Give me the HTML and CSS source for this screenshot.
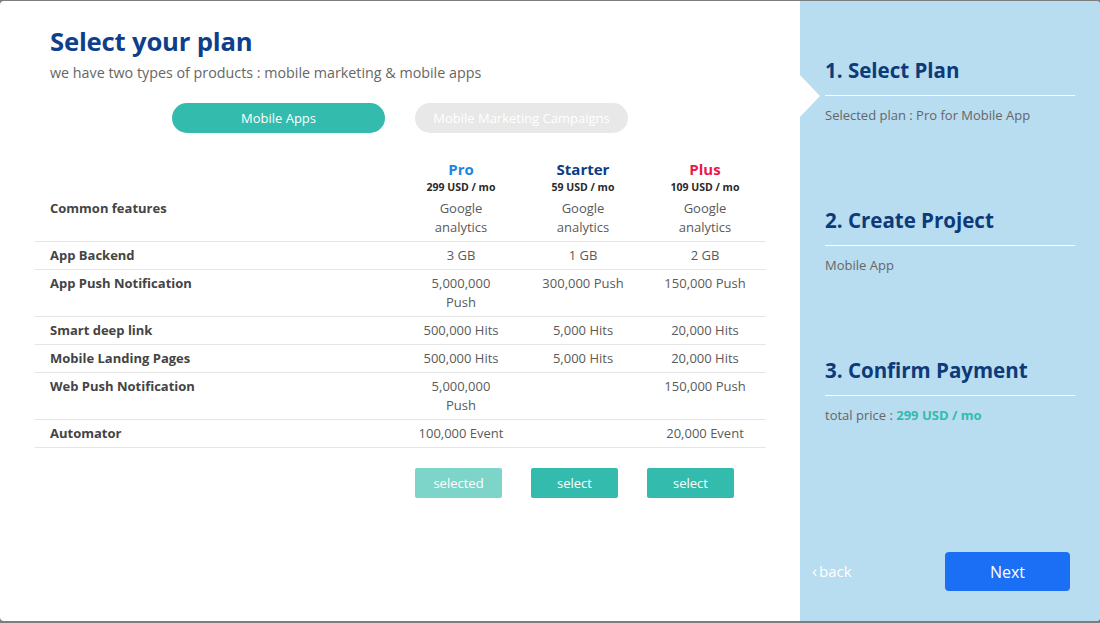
FILE: index.html
```html
<!DOCTYPE html>
<html lang="en">
<head>
<meta charset="utf-8">
<title>Select your plan</title>
<link rel="stylesheet" href="styles.css">
</head>
<body>
<div class="modal">
  <main class="main">
    <h1 class="title">Select your plan</h1>
    <p class="subtitle">we have two types of products : mobile marketing &amp; mobile apps</p>
    <div class="tabs">
      <button class="tab tab-active">Mobile Apps</button>
      <button class="tab tab-off">Mobile Marketing Campaigns</button>
    </div>
    <table class="plans">
      <colgroup><col class="c-label"><col class="c-plan"><col class="c-plan"><col class="c-plan"></colgroup>
      <thead>
        <tr class="head">
          <th></th>
          <th><span class="pname pro">Pro</span><span class="price">299 USD / mo</span></th>
          <th><span class="pname starter">Starter</span><span class="price">59 USD / mo</span></th>
          <th><span class="pname plus">Plus</span><span class="price">109 USD / mo</span></th>
        </tr>
      </thead>
      <tbody>
        <tr><td class="lbl">Common features</td><td>Google<br>analytics</td><td>Google<br>analytics</td><td>Google<br>analytics</td></tr>
        <tr><td class="lbl">App Backend</td><td>3 GB</td><td>1 GB</td><td>2 GB</td></tr>
        <tr><td class="lbl">App Push Notification</td><td>5,000,000<br>Push</td><td>300,000 Push</td><td>150,000 Push</td></tr>
        <tr><td class="lbl">Smart deep link</td><td>500,000 Hits</td><td>5,000 Hits</td><td>20,000 Hits</td></tr>
        <tr><td class="lbl">Mobile Landing Pages</td><td>500,000 Hits</td><td>5,000 Hits</td><td>20,000 Hits</td></tr>
        <tr><td class="lbl">Web Push Notification</td><td>5,000,000<br>Push</td><td></td><td>150,000 Push</td></tr>
        <tr><td class="lbl">Automator</td><td>100,000 Event</td><td></td><td>20,000 Event</td></tr>
      </tbody>
    </table>
    <div class="actions">
      <button class="pick pick-selected">selected</button>
      <button class="pick">select</button>
      <button class="pick">select</button>
    </div>
  </main>
  <aside class="side">
    <section class="step">
      <h2 class="step-title">1. Select Plan</h2>
      <p class="step-text">Selected plan : Pro for Mobile App</p>
    </section>
    <section class="step">
      <h2 class="step-title">2. Create Project</h2>
      <p class="step-text">Mobile App</p>
    </section>
    <section class="step">
      <h2 class="step-title">3. Confirm Payment</h2>
      <p class="step-text">total price : <strong class="total">299 USD / mo</strong></p>
    </section>
    <div class="footer">
      <a class="back" href="#"><span class="chev">‹</span>back</a>
      <button class="next">Next</button>
    </div>
  </aside>
</div>
</body>
</html>
```

FILE: styles.css
```css
* { box-sizing: border-box; }
html, body { margin: 0; padding: 0; }
body {
  width: 1100px;
  height: 623px;
  background: #7d7d7d;
  font-family: "Open Sans", "Noto Sans", sans-serif;
  overflow: hidden;
}
.modal {
  margin-top: 1px;
  width: 1100px;
  height: 620px;
  display: flex;
  background: #fff;
  border-radius: 4px;
  overflow: hidden;
}
.main {
  width: 800px;
  padding: 0 35px;
  display: flex;
  flex-direction: column;
}
.title {
  margin: 25px 0 0 15px;
  font-size: 25.7px;
  line-height: 32px;
  font-weight: 700;
  color: #0f3f8c;
  letter-spacing: -0.2px;
}
.subtitle {
  margin: 5px 0 0 15px;
  font-size: 14.3px;
  line-height: 20px;
  color: #666;
}
.tabs {
  margin-top: 20px;
  display: flex;
  justify-content: center;
  gap: 30px;
}
.tab {
  width: 213px;
  height: 30px;
  border: 0;
  border-radius: 15px;
  font-family: inherit;
  font-size: 13px;
  color: #fff;
  padding: 0;
}
.tab-active { background: #33bbad; }
.tab-off { background: #e8e8e8; }
.plans {
  margin-top: 27px;
  width: 731px;
  border-collapse: collapse;
  table-layout: fixed;
  font-size: 13px;
  color: #5a5a5a;
}
.c-label { width: 365px; }
.c-plan { width: 122px; }
.head th {
  padding: 0;
  text-align: center;
  vertical-align: top;
}
.pname {
  display: block;
  font-size: 15px;
  line-height: 18px;
  font-weight: 700;
}
.pro { color: #1e86e0; }
.starter { color: #0d3c82; }
.plus { color: #e8194c; }
.price {
  display: block;
  padding-top: 2px;
  font-size: 10.5px;
  line-height: 15px;
  font-weight: 700;
  color: #2a2a2a;
}
.plans td {
  padding: 4px 0;
  line-height: 19px;
  text-align: center;
  vertical-align: top;
  border-bottom: 1px solid #e6e6e6;
}
.plans td.lbl {
  text-align: left;
  padding-left: 15px;
  font-weight: 700;
  color: #444;
}
.actions {
  margin: 20px 0 0 380px;
  display: flex;
  gap: 29px;
}
.pick {
  width: 87px;
  height: 30px;
  border: 0;
  border-radius: 2px;
  background: #33bbad;
  color: #fff;
  font-family: inherit;
  font-size: 13px;
  padding: 0;
}
.pick-selected { background: #7dd5ca; }
.side {
  position: relative;
  width: 300px;
  background: #b8dcf0;
  padding: 55px 25px 0 25px;
  display: flex;
  flex-direction: column;
}
.side::before {
  content: "";
  position: absolute;
  left: 0;
  top: 74px;
  border-top: 21px solid transparent;
  border-bottom: 21px solid transparent;
  border-left: 20px solid #fff;
}
.step {
  height: 150px;
}
.step-title {
  margin: 0;
  padding-bottom: 11px;
  font-size: 20.5px;
  line-height: 28px;
  font-weight: 700;
  color: #0d3a78;
  border-bottom: 1px solid #fff;
}
.step-text {
  margin: 10px 0 0;
  font-size: 13px;
  line-height: 18px;
  color: #666;
}
.total {
  color: #33bbad;
  font-weight: 700;
}
.footer {
  margin: auto 5px 30px -13px;
  display: flex;
  align-items: center;
  justify-content: space-between;
}
.back {
  color: #fff;
  text-decoration: none;
  font-size: 15px;
  line-height: 20px;
  margin-top: -2px;
}
.chev {
  font-size: 17px;
  margin-right: 2px;
}
.next {
  width: 125px;
  height: 39px;
  border: 0;
  border-radius: 4px;
  background: #1b6ff5;
  color: #fff;
  font-family: inherit;
  font-size: 16px;
  padding: 0;
}
```
